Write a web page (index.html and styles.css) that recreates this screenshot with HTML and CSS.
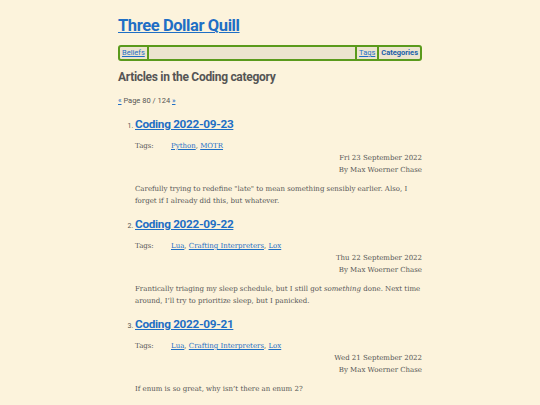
FILE: index.html
```html
<!DOCTYPE html>
<html lang="en">
<head>
<meta charset="utf-8">
<title>Three Dollar Quill</title>
<link rel="stylesheet" href="styles.css">
</head>
<body>
<div class="page">
  <header class="site-header">
    <h1 class="site-title"><a href="#">Three Dollar Quill</a></h1>
    <nav class="site-nav">
      <a class="nav-link" href="#">Beliefs</a>
      <span class="nav-spacer"></span>
      <a class="nav-link" href="#">Tags</a>
      <a class="nav-link nav-current" href="#">Categories</a>
    </nav>
  </header>
  <main>
    <h2 class="page-heading">Articles in the Coding category</h2>
    <p class="pager"><a href="#">«</a> Page 80 / 124 <a href="#">»</a></p>
    <ol class="articles">
      <li class="article">
        <h3 class="article-title"><a href="#">Coding 2022-09-23</a></h3>
        <div class="tags"><span class="tags-label">Tags:</span><span class="tags-list"><a href="#">Python</a>, <a href="#">MOTR</a></span></div>
        <div class="meta"><div>Fri 23 September 2022</div><div>By Max Woerner Chase</div></div>
        <p class="summary">Carefully trying to redefine "late" to mean something sensibly earlier. Also, I forget if I already did this, but whatever.</p>
      </li>
      <li class="article">
        <h3 class="article-title"><a href="#">Coding 2022-09-22</a></h3>
        <div class="tags"><span class="tags-label">Tags:</span><span class="tags-list"><a href="#">Lua</a>, <a href="#">Crafting Interpreters</a>, <a href="#">Lox</a></span></div>
        <div class="meta"><div>Thu 22 September 2022</div><div>By Max Woerner Chase</div></div>
        <p class="summary">Frantically triaging my sleep schedule, but I still got <em>something</em> done. Next time around, I’ll try to prioritize sleep, but I panicked.</p>
      </li>
      <li class="article">
        <h3 class="article-title"><a href="#">Coding 2022-09-21</a></h3>
        <div class="tags"><span class="tags-label">Tags:</span><span class="tags-list"><a href="#">Lua</a>, <a href="#">Crafting Interpreters</a>, <a href="#">Lox</a></span></div>
        <div class="meta"><div>Wed 21 September 2022</div><div>By Max Woerner Chase</div></div>
        <p class="summary">If enum is so great, why isn’t there an enum 2?</p>
      </li>
    </ol>
  </main>
</div>
</body>
</html>
```

FILE: styles.css
```css
html, body {
  margin: 0;
  padding: 0;
  background: #fcf3dc;
}
body {
  font-family: "DejaVu Serif", "Liberation Serif", serif;
  color: #555555;
  font-size: 7px;
  line-height: 12px;
}
a {
  color: #1f6fc5;
}
.page {
  width: 304px;
  margin: 0 auto;
  padding-top: 14px;
}
.site-title {
  margin: 0;
  font-family: Roboto, "Open Sans", sans-serif;
  font-size: 16.5px;
  line-height: 24px;
  font-weight: 700;
  letter-spacing: -0.4px;
}
.site-nav {
  margin-top: 7px;
  display: flex;
  align-items: stretch;
  border: 2px solid #5a9a1c;
  border-radius: 3px;
  background: #ece4cf;
  height: 12px;
  font-family: Roboto, "Open Sans", sans-serif;
  font-size: 7.5px;
  line-height: 12px;
}
.nav-link {
  padding: 0 2px;
  border-right: 2px solid #5a9a1c;
}
.nav-link:last-child {
  border-right: none;
}
.nav-spacer {
  flex: 1;
  border-right: 2px solid #5a9a1c;
}
.nav-current {
  font-weight: 700;
  color: #1a5fa8;
  text-decoration: none;
}
.page-heading {
  margin: 8px 0 0;
  font-family: Roboto, "Open Sans", sans-serif;
  font-size: 12px;
  line-height: 16px;
  font-weight: 700;
  letter-spacing: -0.3px;
  color: #555555;
}
.pager {
  margin: 10px 0 0;
  font-family: Roboto, "Open Sans", sans-serif;
  font-size: 7.5px;
  line-height: 12px;
}
.articles {
  margin: 9px 0 0;
  padding-left: 17px;
}
.article {
  margin-bottom: 9px;
}
.article::marker {
  font-family: Roboto, "Open Sans", sans-serif;
  font-size: 7px;
}
.article-title {
  margin: 0;
  font-family: Roboto, "Open Sans", sans-serif;
  font-size: 11.75px;
  line-height: 16px;
  font-weight: 700;
  letter-spacing: -0.3px;
}
.tags {
  margin-top: 8px;
  display: flex;
}
.tags-label {
  width: 36px;
}
.meta {
  text-align: right;
}
.summary {
  margin: 7px 0 0;
}
```
